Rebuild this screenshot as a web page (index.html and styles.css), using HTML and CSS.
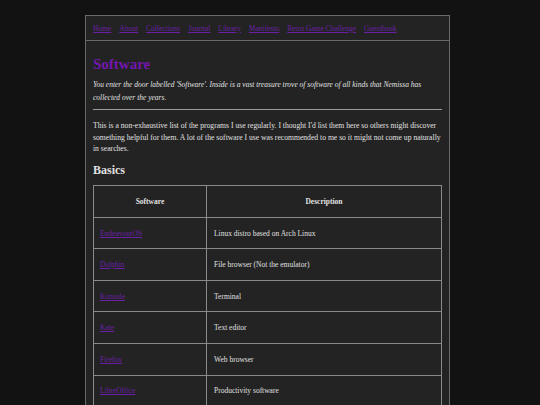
FILE: index.html
```html
<!DOCTYPE html>
<html>
<head>
<meta charset="utf-8">
<link rel="stylesheet" href="styles.css">
</head>
<body>
<div class="page">
  <nav class="nav">
    <a href="#">Home</a>
    <a href="#">About</a>
    <a href="#">Collections</a>
    <a href="#">Journal</a>
    <a href="#">Library</a>
    <a href="#">Manifesto</a>
    <a href="#">Retro Game Challenge</a>
    <a href="#">Guestbook</a>
  </nav>
  <main class="content">
    <h1 class="title">Software</h1>
    <p class="intro">You enter the door labelled 'Software'. Inside is a vast treasure trove of software of all kinds that Nemissa has collected over the years.</p>
    <hr class="rule">
    <p class="text">This is a non-exhaustive list of the programs I use regularly. I thought I'd list them here so others might discover something helpful for them. A lot of the software I use was recommended to me so it might not come up naturally in searches.</p>
    <h2 class="section">Basics</h2>
    <table class="table">
      <thead>
        <tr><th class="col-name">Software</th><th>Description</th></tr>
      </thead>
      <tbody>
        <tr><td><a href="#">EndeavourOS</a></td><td>Linux distro based on Arch Linux</td></tr>
        <tr><td><a href="#">Dolphin</a></td><td>File browser (Not the emulator)</td></tr>
        <tr><td><a href="#">Konsole</a></td><td>Terminal</td></tr>
        <tr><td><a href="#">Kate</a></td><td>Text editor</td></tr>
        <tr><td><a href="#">Firefox</a></td><td>Web browser</td></tr>
        <tr><td><a href="#">LibreOffice</a></td><td>Productivity software</td></tr>
        <tr><td><a href="#">GIMP</a></td><td>Image editor</td></tr>
      </tbody>
    </table>
  </main>
</div>
</body>
</html>
```
FILE: styles.css
```css
html, body {
  margin: 0;
  padding: 0;
  background: #121212;
}
body {
  font-family: "Liberation Serif", "Times New Roman", serif;
  font-size: 7.5px;
  color: #e0e0e0;
  padding-top: 15px;
}
.page {
  width: 363px;
  margin-left: 85px;
  background: #232323;
  border: 1px solid #6a6a6a;
  border-bottom: none;
  min-height: 400px;
}
a {
  color: #6a1fa6;
}
.nav {
  display: flex;
  gap: 8px;
  padding: 0 7px;
  height: 24px;
  align-items: center;
  border-bottom: 1px solid #6a6a6a;
}
.content {
  padding: 0 7px;
}
.title {
  font-size: 15px;
  color: #7417b0;
  margin: 14px 0 5px;
  line-height: 18px;
}
.intro {
  font-style: italic;
  margin: 0;
  line-height: 13px;
}
.rule {
  border: none;
  border-top: 1px solid #9a9a9a;
  margin: 5px 0 10px;
}
.text {
  margin: 0;
  font-size: 7.65px;
  line-height: 11.7px;
}
.section {
  font-size: 12px;
  margin: 8px 0 8px;
  line-height: 14px;
}
.table {
  width: 100%;
  border-collapse: collapse;
  border: 1px solid #8a8a8a;
}
.table th, .table td {
  border: 1px solid #8a8a8a;
  height: 30.6px;
  padding: 0 6px;
  text-align: left;
}
.table th {
  text-align: center;
  font-weight: bold;
}
.col-name {
  width: 100px;
}
.table td:last-child {
  padding-left: 7px;
}
```
